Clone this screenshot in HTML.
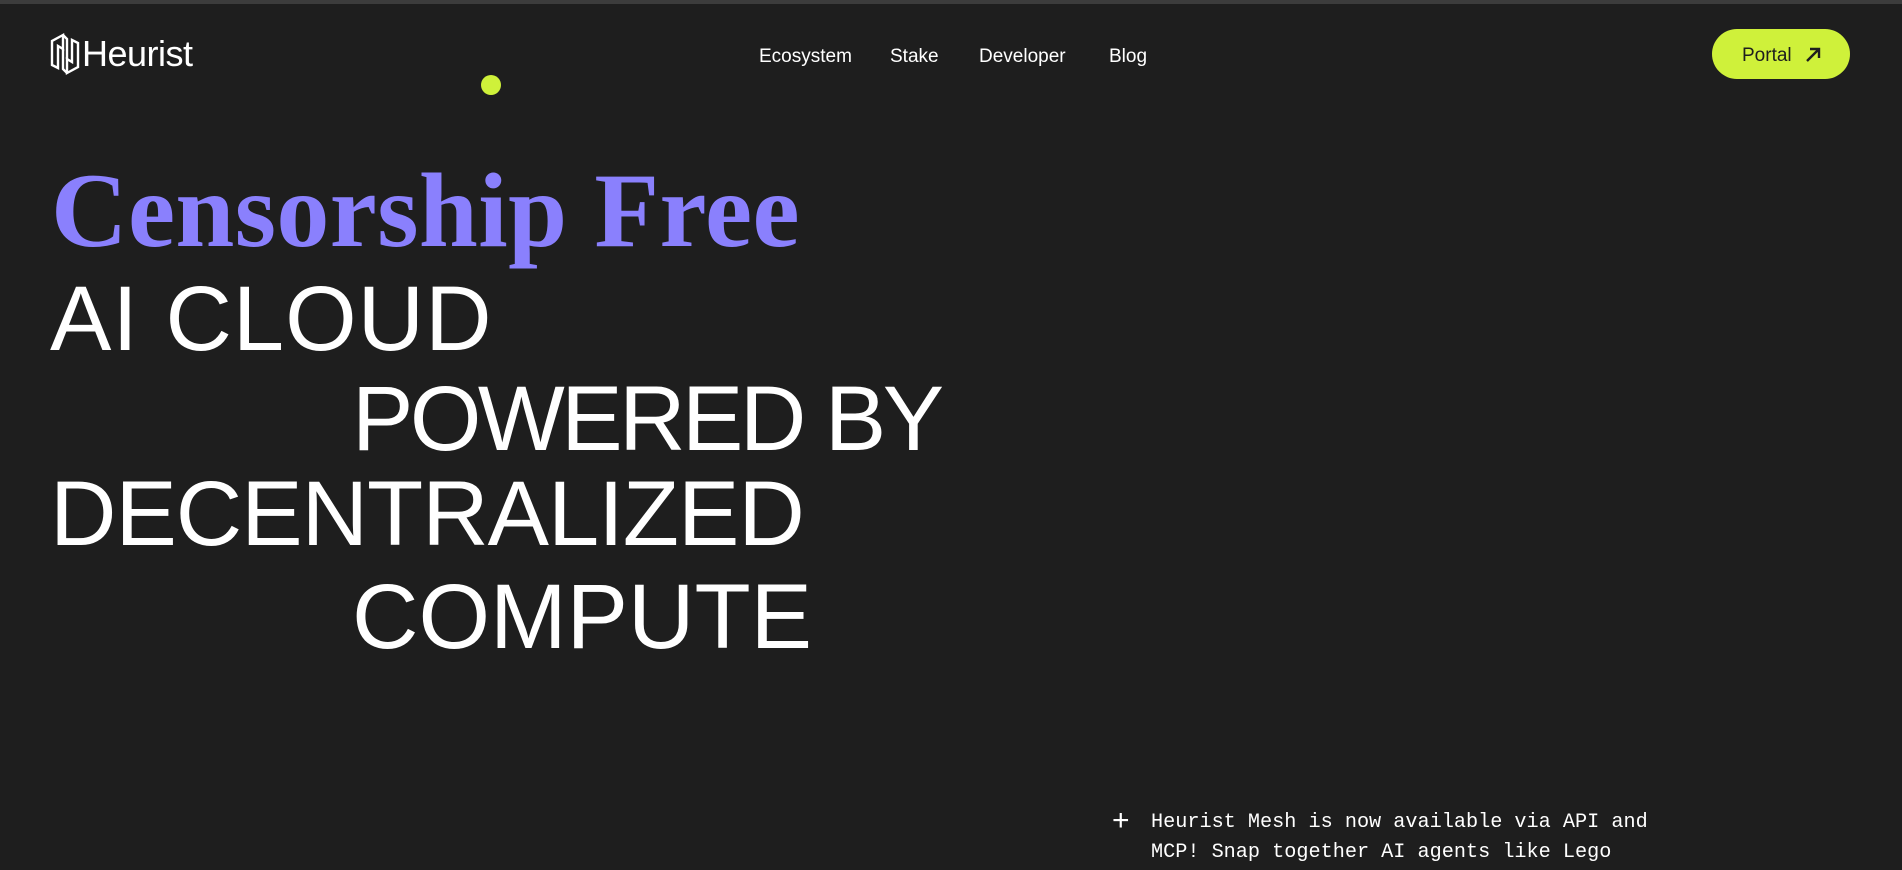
<!DOCTYPE html>
<html><head><meta charset="utf-8"><style>
*{margin:0;padding:0;box-sizing:border-box}
body{width:1902px;height:870px;background:#1e1e1e;overflow:hidden;position:relative;font-family:"Liberation Sans",sans-serif;color:#fff}
.top{position:absolute;left:0;top:0;width:1902px;height:4px;background:#3c3c3c}
.abs{position:absolute;white-space:nowrap}
.nav{font-size:19px;top:46px}
.big{font-size:92px;line-height:92px}
</style></head><body>
<div class="top"></div>
<svg class="abs" style="left:50px;top:33px" width="30" height="42" viewBox="0 0 30 42" fill="none" stroke="#fff" stroke-width="2.4" stroke-linejoin="miter">
<path d="M13 2 L2 8 V32 L8 35 V13 L13 16Z"/>
<path d="M17 40 L28 34 V10 L22 7 V29 L17 26Z"/>
<path d="M13 16 V36 L17 40 M17 26 V6 L13 2"/>
</svg>
<div class="abs" style="left:82px;top:33px;font-size:36px;line-height:42px;letter-spacing:-0.5px">Heurist</div>
<div class="abs nav" style="left:759px">Ecosystem</div>
<div class="abs nav" style="left:890px">Stake</div>
<div class="abs nav" style="left:979px">Developer</div>
<div class="abs nav" style="left:1109px">Blog</div>
<div class="abs" style="left:1712px;top:29px;width:138px;height:50px;border-radius:25px;background:#cff13a;color:#1e1e1e;font-size:19px;line-height:54px;padding-left:30px">Portal
<svg style="position:absolute;left:92px;top:17px" width="18" height="18" viewBox="0 0 18 18" fill="none" stroke="#1e1e1e" stroke-width="2.4"><path d="M3 15 L15 3 M6 3 H15 V12"/></svg></div>
<div class="abs" style="left:481px;top:75px;width:20px;height:20px;border-radius:50%;background:#cff13a"></div>
<div class="abs" style="left:51px;top:158px;font-family:'Liberation Serif',serif;font-weight:bold;font-size:106px;line-height:106px;letter-spacing:0.4px;color:#8a80fd">Censorship Free</div>
<div class="abs big" style="left:50px;top:273px;letter-spacing:1px">AI CLOUD</div>
<div class="abs big" style="left:352px;top:373px;letter-spacing:-3.5px">POWERED BY</div>
<div class="abs big" style="left:50px;top:468px;letter-spacing:-1px">DECENTRALIZED</div>
<div class="abs big" style="left:352px;top:571px">COMPUTE</div>
<div class="abs" style="left:1112px;top:806px;font-size:30px;line-height:30px">+</div>
<div class="abs" style="left:1151px;top:808px;font-family:'Liberation Mono',monospace;font-size:20.2px;line-height:30px">Heurist Mesh is now available via API and<br>MCP! Snap together AI agents like Lego</div>
</body></html>
